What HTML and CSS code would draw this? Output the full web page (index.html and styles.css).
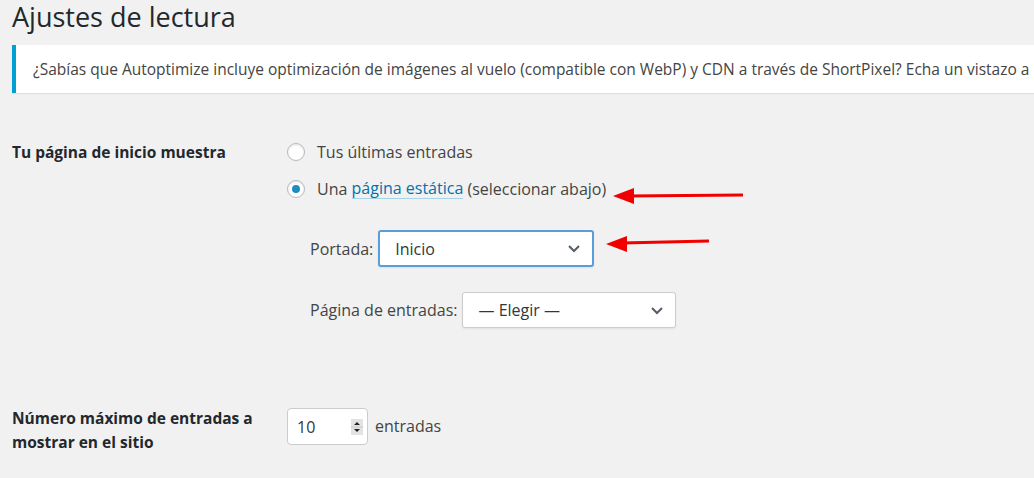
FILE: index.html
```html
<!DOCTYPE html>
<html lang="es">
  <head>
    <meta charset="utf-8" />
    <title>Ajustes de lectura</title>
    <link rel="stylesheet" href="styles.css">
  </head>
  <body>
    <div class="wrap">
      <h1>Ajustes de lectura</h1>
      <div class="notice">
        <p>¿Sabías que Autoptimize incluye optimización de imágenes al vuelo (compatible con WebP) y CDN a través de ShortPixel? Echa un vistazo a</p>
      </div>

      <div class="form-row front">
        <div class="th">Tu página de inicio muestra</div>
        <div class="td">
          <label class="radio-line"><span class="radio"></span>Tus últimas entradas</label>
          <label class="radio-line"><span class="radio checked"></span>Una&nbsp;<a href="#">página estática</a>&nbsp;(seleccionar abajo)</label>
          <div class="pages">
            <div class="page-line">
              <span>Portada:</span>
              <div class="select focus wide1">
                <span>Inicio</span>
                <svg width="14" height="9" viewBox="0 0 14 9"><path d="M2 2l5 5 5-5" fill="none" stroke="#555d66" stroke-width="2"/></svg>
              </div>
            </div>
            <div class="page-line">
              <span>Página de entradas:</span>
              <div class="select wide2">
                <span>— Elegir —</span>
                <svg width="14" height="9" viewBox="0 0 14 9"><path d="M2 2l5 5 5-5" fill="none" stroke="#555d66" stroke-width="2"/></svg>
              </div>
            </div>
          </div>
        </div>
      </div>

      <div class="form-row posts">
        <div class="th">Número máximo de entradas a mostrar en el sitio</div>
        <div class="td inline">
          <div class="number">
            <span>10</span>
            <svg class="spin" width="12" height="16" viewBox="0 0 12 16">
              <rect width="12" height="16" fill="#e3e3e3"/>
              <line x1="0" y1="8" x2="12" y2="8" stroke="#c8c8c8"/>
              <path d="M3 6l3-3 3 3z M3 10l3 3 3-3z" fill="#222"/>
            </svg>
          </div>
          <span>entradas</span>
        </div>
      </div>
    </div>

    <!-- annotation arrows -->
    <svg class="arrows" width="1034" height="478" viewBox="0 0 1034 478">
      <line x1="743" y1="195" x2="628" y2="196" stroke="#f00000" stroke-width="3"/>
      <path d="M613 196 L634 188 L634 204 Z" fill="#f00000"/>
      <line x1="709" y1="241" x2="622" y2="243" stroke="#f00000" stroke-width="3"/>
      <path d="M606 244 L627 236 L627 252 Z" fill="#f00000"/>
    </svg>
  </body>
</html>
```

FILE: styles.css
```css
body{
  margin: 0;
  background: #f1f1f1;
  color: #23282d;
  font-family: "Open Sans", "Noto Sans", sans-serif;
  font-size: 16px;
  overflow: hidden;
}

.wrap{
  padding-left: 12px;
  position: relative;
}

h1{
  margin: 0;
  font-size: 27px;
  font-weight: 400;
  line-height: 34px;
  color: #23282d;
}

.notice{
  margin-top: 11px;
  height: 48px;
  background: #fff;
  border-left: 4px solid #00a0d2;
  box-shadow: 0 1px 1px rgba(0,0,0,.08);
  display: flex;
  align-items: center;
  white-space: nowrap;
  overflow: hidden;
}

.notice p{
  margin: 0 0 0 17px;
  font-size: 15.5px;
  color: #444;
}

.form-row{
  display: flex;
}

.th{
  width: 275px;
  font-weight: 700;
  font-size: 15.5px;
  line-height: 24px;
}

.td{
  flex: 1;
}

.front{
  margin-top: 47px;
}

.radio-line{
  display: flex;
  align-items: center;
  height: 24px;
  margin-bottom: 13px;
  color: #444;
}

.radio-line a{
  color: #0073aa;
  text-decoration: none;
  border-bottom: 1px solid #a7d3e8;
  line-height: 19px;
}

.radio{
  width: 16px;
  height: 16px;
  border: 1px solid #b4b9be;
  border-radius: 50%;
  background: #fff;
  box-shadow: inset 0 1px 2px rgba(0,0,0,.1);
  margin-right: 12px;
  display: flex;
  align-items: center;
  justify-content: center;
}

.radio.checked::after{
  content: "";
  width: 8px;
  height: 8px;
  border-radius: 50%;
  background: #1e8cbe;
}

.pages{
  padding-left: 23px;
  padding-top: 16px;
}

.page-line{
  display: flex;
  align-items: center;
  gap: 5px;
  margin-bottom: 25px;
  color: #444;
}

.select{
  height: 36px;
  border: 1px solid #ccc;
  border-radius: 3px;
  background: #fff;
  display: flex;
  align-items: center;
  justify-content: space-between;
  padding: 0 11px 0 15px;
  box-sizing: border-box;
  color: #32373c;
  box-shadow: 0 1px 2px rgba(0,0,0,.07);
}

.select.focus{
  border: 2px solid #5b9dd9;
  height: 37px;
}

.wide1{
  width: 216px;
}

.wide2{
  width: 214px;
}

.posts{
  margin-top: 53px;
}

.inline{
  display: flex;
  align-items: flex-start;
  gap: 7px;
  padding-top: 2px;
  color: #444;
}

.inline > span{
  line-height: 37px;
}

.number{
  width: 81px;
  height: 37px;
  box-sizing: border-box;
  border: 1px solid #ccc;
  border-radius: 4px;
  background: #fff;
  display: flex;
  align-items: center;
  justify-content: space-between;
  padding: 0 4px 0 9px;
  color: #32373c;
}

.arrows{
  position: absolute;
  left: 0;
  top: 0;
  pointer-events: none;
}
```
